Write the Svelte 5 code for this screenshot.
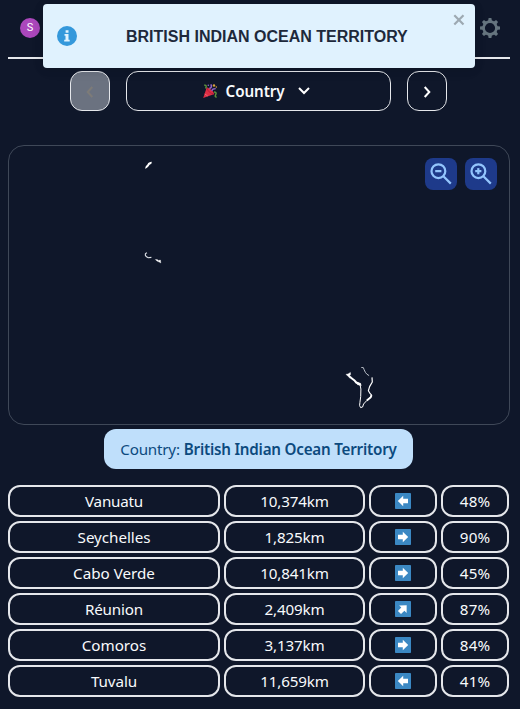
<script>
  const guesses = [
    { name: 'Vanuatu', distance: '10,374km', angle: 180, score: '48%', spacing: -0.2 },
    { name: 'Seychelles', distance: '1,825km', angle: 0, score: '90%', spacing: -0.05 },
    { name: 'Cabo Verde', distance: '10,841km', angle: 0, score: '45%', spacing: 0 },
    { name: 'Réunion', distance: '2,409km', angle: -45, score: '87%', spacing: -0.15 },
    { name: 'Comoros', distance: '3,137km', angle: 0, score: '84%', spacing: 0 },
    { name: 'Tuvalu', distance: '11,659km', angle: 180, score: '41%', spacing: -0.1 }
  ];
  const teeth = [0, 45, 90, 135, 180, 225, 270, 315];
</script>

<main>
  <header>
    <span class="avatar">S</span>
    <svg class="gear" width="20" height="20" viewBox="0 0 20 20">
      <circle cx="10" cy="10" r="6.4" fill="none" stroke="currentColor" stroke-width="2.6" />
      {#each teeth as a}
        <path d="M7.9 4 8.6 0h2.8l.7 4z" fill="currentColor" transform={`rotate(${a} 10 10)`} />
      {/each}
    </svg>
  </header>

  <nav>
    <button class="step" disabled aria-label="Previous">
      <svg width="12" height="14" viewBox="0 0 12 14"><path d="M8.3 2 3.7 7l4.6 5" /></svg>
    </button>
    <button class="round">
      <svg class="party" width="16" height="16" viewBox="0 0 16 16">
        <path d="M1.2 15 4.8 4.2Q10.4 6.2 12.4 11z" fill="#dd2e44" />
        <path d="M5 4.8Q5.8 9.8 11.8 11" fill="none" stroke="#b91f3a" stroke-width="1" />
        <path d="m2.8 11 3 2" stroke="#ed6474" stroke-width="1" />
        <path d="M2.2 2.3q3-.8 1.5 3.2" fill="none" stroke="#5c913b" stroke-width="1.5" />
        <path d="M7.3 5.6q3.3-1.2 1.5-4.3" fill="none" stroke="#9266cc" stroke-width="1.6" />
        <path d="M10 7.9q0-2.3 3.7-2.3" fill="none" stroke="#9266cc" stroke-width="1.3" />
        <path d="M12 9q3 .1 1.7 2.6t1 2.4" fill="none" stroke="#5c913b" stroke-width="1.5" />
        <circle cx="12" cy="2.5" r="1.2" fill="#dca33b" />
        <circle cx="14.3" cy="4" r=".8" fill="#dca33b" />
        <circle cx="6.3" cy="2.2" r=".8" fill="#9266cc" />
      </svg>
      <span>Country</span>
      <svg class="down" width="14" height="10" viewBox="0 0 14 10"><path d="m2 2 5 5 5-5" /></svg>
    </button>
    <button class="step" aria-label="Next">
      <svg width="12" height="14" viewBox="0 0 12 14"><path d="M3.7 2 8.3 7l-4.6 5" /></svg>
    </button>
  </nav>

  <section class="map">
    <svg class="land" width="500" height="278" viewBox="9 146 500 278">
      <path d="m145 168.7.8-2.4 1.6-1.9.8-1.4 2-1.1 1.6-.1-.4 2-1.8 1-1.2 1.8-1.6 1.5z" fill="#fff" />
      <path d="m145.5 253.3-.2 1.8.9 1.5 2 1.1 3.2-.3M145.6 253.5l1.4-.7" fill="none" stroke="#dde1e7" stroke-width="1.1" />
      <path d="m155.3 259.5 2 .1 1 .8 2.2-.3.3 2.9-1.6-.9-2.3-1z" fill="#fff" stroke="#fff" stroke-width=".3" />
      <g fill="none" stroke="#fff" stroke-linejoin="round">
        <path d="m361.3 367.5 2 .1.8 2 1.3 2.8 1.5 1.8 2.2 1.4" stroke="#cbd0d8" stroke-width=".9" />
        <path d="m372 377.4.3 4.6-2.7 4.6-1.2 4.1 1.8 3 1.5 1.5" stroke-width="1.2" />
        <path d="m371.4 395-1 2.4-3.6 3.1-3.2 3.5-1 3-2 .6-1-2 .3-3 .8-6 .2-7.5-.9-4.8" stroke-width="1" />
        <path d="m371.6 395.2-.8 2-4 3.3" stroke-width="1.8" />
        <path d="m350 377 4.2 3.2 2 2.3 4.2 2" stroke-width="2" />
      </g>
      <path d="m346 374.3 2-.3 2.4-1.6.2 2.1-1 .7 1.3 1.6-1 1.3-2.2-2zM356 382l4.5 1.3.8 2.2-3.8-.8z" fill="#fff" stroke="#fff" stroke-width=".4" />
    </svg>
    <div class="zoom">
      {#each ['out', 'in'] as mode}
        <button aria-label={`Zoom ${mode}`}>
          <svg width="24" height="24" viewBox="0 0 24 24">
            <circle cx="9.4" cy="9.2" r="6.9" />
            <path d="m14.4 14.2 7.4 7.4M6.2 9.2h6.2" />
            {#if mode === 'in'}<path d="M9.3 6.1v6.2" />{/if}
          </svg>
        </button>
      {/each}
    </div>
  </section>

  <div class="answer"><span>Country: </span><b>British Indian Ocean Territory</b></div>

  <section class="guesses">
    {#each guesses as guess}
      <div class="cell"><span style:letter-spacing={`${guess.spacing}px`}>{guess.name}</span></div>
      <div class="cell">{guess.distance}</div>
      <div class="cell">
        <svg width="16" height="16" viewBox="0 0 16 16">
          <rect width="16" height="16" rx=".8" fill="#3b88c3" />
          <path d="M3 5.8h4.8V2.7L13.2 8l-5.4 5.3v-3.1H3z" fill="#fff" transform={`rotate(${guess.angle} 8 8)`} />
        </svg>
      </div>
      <div class="cell">{guess.score}</div>
    {/each}
  </section>

  <aside class="toast">
    <svg width="20" height="20" viewBox="0 0 20 20">
      <circle cx="10" cy="10" r="10" fill="#3498db" />
      <path d="M8.6 4.2h2.9v2.5H8.6zM7.5 8.1h4v5.6h1.2v1.7H7.2v-1.7h1.3V9.8h-1z" fill="#e0f2fe" />
    </svg>
    <strong>BRITISH INDIAN OCEAN TERRITORY</strong>
    <svg class="close" width="12" height="12" viewBox="0 0 12 12"><path d="m1.3 1.3 9.2 9.2m0-9.2-9.2 9.2" /></svg>
  </aside>
</main>

<style>
  :global(body) { background: #0f172a; }
  main {
    position: relative; box-sizing: border-box; width: 520px; height: 709px; padding: 0 10px 0 8px;
    overflow: hidden; background: #0f172a; color: #f8fafc;
    font: 15.2px/24px "Noto Sans", "Open Sans", sans-serif;
  }
  button { box-sizing: border-box; padding: 0; color: inherit; font: inherit; background: none; }
  header {
    display: flex; align-items: center; justify-content: space-between; box-sizing: border-box;
    height: 59px; padding: 0 10px 1px 12px; border-bottom: 2px solid #e5e7eb;
  }
  .avatar {
    width: 20px; height: 20px; border-radius: 50%; background: #ab47bc; color: #fff;
    font: 11px/20px Roboto, sans-serif; text-align: center;
  }
  .gear { color: #66757f; }
  nav { display: flex; gap: 16px; margin: 12px 0 0 62px; }
  nav button {
    display: flex; align-items: center; justify-content: center; height: 40px;
    border: 1px solid #e5e7eb; border-radius: 12px;
  }
  .step { width: 40px; }
  .step path, .down path { fill: none; stroke: #fff; stroke-width: 2; }
  .step svg { margin-top: 2px; }
  .step:disabled { background: #6b7280; }
  .step:disabled path { stroke: #7d7b78; }
  .round { width: 265px; padding-right: 4px; font-weight: 600; letter-spacing: -.08px; }
  .round span { margin: 0 13px 0 8px; }
  .map {
    display: flex; position: relative; box-sizing: border-box; width: 502px; height: 280px;
    margin-top: 34px; border: 1px solid #3f4858; border-radius: 16px;
  }
  .zoom { position: absolute; top: 12px; right: 12px; display: flex; gap: 8px; }
  .zoom button {
    display: flex; align-items: center; justify-content: center; width: 32px; height: 32px;
    border: 0; border-radius: 8px; background: #1e3a8a;
  }
  .zoom svg { fill: none; stroke: #93c5fd; stroke-width: 2.2; }
  .answer {
    display: flex; align-items: center; justify-content: center; gap: 4px; width: 309px; height: 40px;
    margin: 4px 0 0 96px; border-radius: 12px; background: #bfdffb; color: #0c4a7e; white-space: nowrap;
  }
  .answer span { letter-spacing: -.22px; }
  .answer b { font-weight: 600; letter-spacing: -.22px; }
  .guesses {
    display: grid; grid-template-columns: 212px 141px 68px 68px; grid-auto-rows: 32px; gap: 4px;
    width: 501px; margin-top: 16px;
  }
  .cell {
    display: flex; align-items: center; justify-content: center; box-sizing: border-box;
    border: 2px solid #e5e7eb; border-radius: 12px; letter-spacing: -.15px;
  }
  .cell:nth-child(4n) { letter-spacing: .1px; }
  .toast {
    position: absolute; top: 4px; left: 43px; display: flex; align-items: center; box-sizing: border-box;
    width: 432px; height: 64px; padding-left: 14px; border-radius: 4px; background: #e0f2fe; color: #1e293b;
    box-shadow: 0 1px 10px rgb(0 0 0 / .1), 0 2px 15px rgb(0 0 0 / .05);
  }
  .toast strong { margin: 1px 0 0 49px; font: 700 16px/24px "Liberation Sans", sans-serif; white-space: nowrap; }
  .close { position: absolute; top: 10px; right: 10px; fill: none; stroke: #9da9b2; stroke-width: 2.2; }
</style>
